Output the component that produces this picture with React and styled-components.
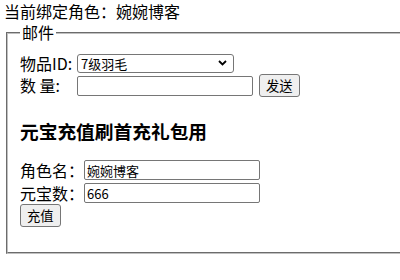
import styled, { createGlobalStyle } from "styled-components";

const GlobalStyle = createGlobalStyle`
  html, body {
    margin: 0;
    padding: 0;
    background: #ffffff;
    overflow: hidden;
  }
  body {
    font-family: "Microsoft YaHei", "Noto Sans CJK SC", sans-serif;
    font-size: 16px;
    color: #000000;
  }
`;

// 상단 현재 캐릭터
const Header = styled.div`
  height: 20px;
  padding-top: 1px;
  line-height: 20px;
  padding-left: 4px;
  white-space: nowrap;
`;

// 메일 영역
const MailSet = styled.fieldset`
  width: 400px;
  margin: 2px 0 0 6px;
  padding: 0 12px 25px 12px;
  border: 2px groove #c0c0c0;
  box-sizing: border-box;
`;
const Legend = styled.legend`
  padding: 0 2px;
  line-height: 19px;
`;

const Row = styled.div`
  display: flex;
  align-items: center;
  height: ${(p) => p.$h}px;
  margin-top: ${(p) => p.$top}px;
`;
const Label = styled.span`
  width: ${(p) => p.$w}px;
  line-height: 21px;
  white-space: pre;
  flex-shrink: 0;
`;

// 콤보박스
const SelectWrap = styled.div`
  position: relative;
  display: inline-flex;
  width: 157px;
  height: 19px;
`;
const Select = styled.select`
  appearance: none;
  width: 100%;
  height: 19px;
  box-sizing: border-box;
  padding: 0 20px 0 3px;
  font-family: inherit;
  font-size: 13px;
  line-height: 17px;
  color: #000000;
  border: 1px solid #767676;
  border-radius: 3px;
  background: #ffffff;
  outline: none;
`;
const Chevron = styled.svg`
  position: absolute;
  right: 7px;
  top: 6px;
  width: 9px;
  height: 6px;
  pointer-events: none;
`;

const Input = styled.input`
  width: 176px;
  height: 20px;
  box-sizing: border-box;
  padding: 1px 2px;
  font-family: inherit;
  font-size: 13px;
  line-height: 16px;
  color: #000000;
  border: 1px solid #767676;
  border-radius: 2px;
  outline: none;
`;
const Button = styled.button`
  height: 23px;
  padding: 0 6px;
  margin-left: ${(p) => p.$left || 0}px;
  font-family: inherit;
  font-size: 13.33px;
  color: #000000;
  background: #efefef;
  border: 1px solid #767676;
  border-radius: 3px;
  box-sizing: border-box;
  white-space: nowrap;
`;

const Heading = styled.h3`
  margin: 21px 0 0 0;
  height: 25px;
  line-height: 25px;
  font-size: 18.72px;
  font-weight: bold;
  white-space: nowrap;
`;

export default function App() {
  return (
    <>
      <GlobalStyle />
      <Header>当前绑定角色：婉婉博客</Header>
      <MailSet>
        <Legend>邮件</Legend>
        <Row $h={21} $top={11}>
          <Label $w={57}>物品ID:</Label>
          <SelectWrap>
            <Select defaultValue="7级羽毛">
              <option>7级羽毛</option>
            </Select>
            <Chevron viewBox="0 0 9 6">
              <path d="M1 1 L4.5 4.5 L8 1" fill="none" stroke="#000" strokeWidth="1.8" />
            </Chevron>
          </SelectWrap>
        </Row>
        <Row $h={23} $top={0}>
          <Label $w={57}>数 量:</Label>
          <Input type="text" />
          <Button $left={6}>发送</Button>
        </Row>
        <Heading>元宝充值刷首充礼包用</Heading>
        <Row $h={20} $top={17}>
          <Label $w={64}>角色名：</Label>
          <Input type="text" defaultValue="婉婉博客" />
        </Row>
        <Row $h={20} $top={3}>
          <Label $w={64}>元宝数：</Label>
          <Input type="text" defaultValue="666" />
        </Row>
        <Row $h={23} $top={1}>
          <Button>充值</Button>
        </Row>
      </MailSet>
    </>
  );
}
